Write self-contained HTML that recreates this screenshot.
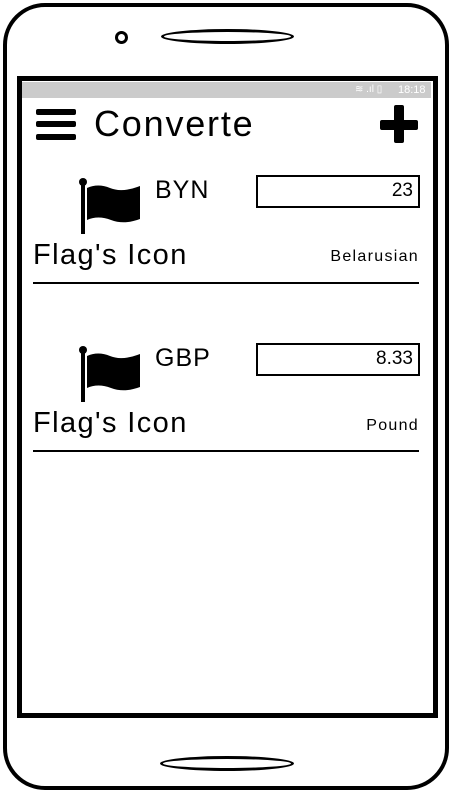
<!DOCTYPE html>
<html><head><style>
body{margin:0;width:450px;height:790px;background:#fff;position:relative;overflow:hidden;font-family:"Liberation Sans",sans-serif;color:#000}
.a{position:absolute}
</style></head><body>
<div class="a" style="left:3px;top:3px;width:438px;height:779px;border:4px solid #000;border-radius:42px"></div>
<div class="a" style="left:115px;top:31px;width:7px;height:7px;border:3px solid #000;border-radius:50%"></div>
<div class="a" style="left:161px;top:29px;width:127px;height:9px;border:3px solid #000;border-radius:50%"></div>
<div class="a" style="left:160px;top:756px;width:128px;height:9px;border:3px solid #000;border-radius:50%"></div>
<div class="a" style="left:17px;top:76px;width:411px;height:632px;border:5px solid #000"></div>
<div class="a" style="left:22px;top:82px;width:409px;height:16px;background:#cbcbcb"></div>
<div class="a" style="left:398px;top:82px;font-size:11px;color:#fff;line-height:16px">18:18</div>
<div class="a" style="left:355px;top:84px;font-size:10px;color:#fff;line-height:12px">≋ .ıl ▯</div>
<div class="a" style="left:36px;top:109px;width:40px;height:6px;background:#000;border-radius:2px"></div>
<div class="a" style="left:36px;top:121px;width:40px;height:6px;background:#000;border-radius:2px"></div>
<div class="a" style="left:36px;top:134px;width:40px;height:6px;background:#000;border-radius:2px"></div>
<div class="a" style="left:94px;top:104px;font-size:36px;line-height:40px;letter-spacing:1.8px">Converte</div>
<div class="a" style="left:380px;top:120px;width:38px;height:10px;background:#000;border-radius:2px"></div>
<div class="a" style="left:394px;top:105px;width:10px;height:38px;background:#000;border-radius:2px"></div>

<svg class="a" style="left:78px;top:176px" width="66" height="60"><circle cx="5" cy="6" r="4"/><rect x="3" y="6" width="4" height="52"/><path d="M9 12 Q20 7 32 12 Q44 17 62 10 L62 43 Q46 49 33 44 Q20 39 9 44Z"/></svg>
<div class="a" style="left:155px;top:175px;font-size:25px;line-height:30px;letter-spacing:1px">BYN</div>
<div class="a" style="left:256px;top:175px;width:160px;height:29px;border:2px solid #000"></div>
<div class="a" style="left:256px;top:179px;width:157px;text-align:right;font-size:19px;line-height:24px">23</div>
<div class="a" style="left:33px;top:238px;font-size:29px;line-height:34px;letter-spacing:1.4px">Flag's Icon</div>
<div class="a" style="left:280px;top:247px;width:139px;text-align:right;font-size:16px;line-height:20px;letter-spacing:1.3px">Belarusian</div>
<div class="a" style="left:33px;top:282px;width:386px;height:2px;background:#000"></div>

<svg class="a" style="left:78px;top:344px" width="66" height="60"><circle cx="5" cy="6" r="4"/><rect x="3" y="6" width="4" height="52"/><path d="M9 12 Q20 7 32 12 Q44 17 62 10 L62 43 Q46 49 33 44 Q20 39 9 44Z"/></svg>
<div class="a" style="left:155px;top:343px;font-size:25px;line-height:30px;letter-spacing:1px">GBP</div>
<div class="a" style="left:256px;top:343px;width:160px;height:29px;border:2px solid #000"></div>
<div class="a" style="left:256px;top:347px;width:157px;text-align:right;font-size:19px;line-height:24px">8.33</div>
<div class="a" style="left:33px;top:406px;font-size:29px;line-height:34px;letter-spacing:1.4px">Flag's Icon</div>
<div class="a" style="left:280px;top:416px;width:139px;text-align:right;font-size:16px;line-height:20px;letter-spacing:1.3px">Pound</div>
<div class="a" style="left:33px;top:450px;width:386px;height:2px;background:#000"></div>
</body></html>
